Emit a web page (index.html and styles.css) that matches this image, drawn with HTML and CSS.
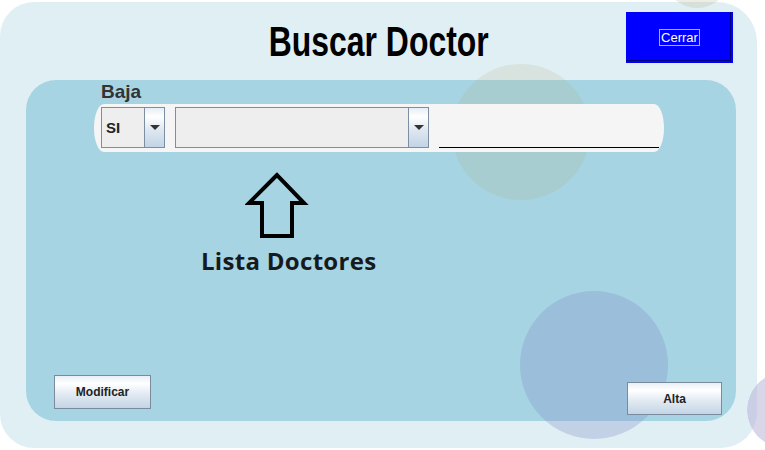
FILE: index.html
```
<!DOCTYPE html>
<html lang="es">
<head>
<meta charset="utf-8">
<title>Buscar Doctor</title>
<link rel="stylesheet" href="styles.css">
</head>
<body>
<div class="frame">
  <span class="blob blob-sun"></span>
  <span class="blob blob-top"></span>
  <span class="blob blob-sea"></span>
  <span class="blob-edge"></span>
  <header class="head">
    <div class="head-side"></div>
    <h1 class="title">Buscar Doctor</h1>
    <button class="close" type="button"><span class="close-label">Cerrar</span></button>
  </header>
  <section class="panel">
    <div class="panel-body">
      <label class="lbl">Baja</label>
      <div class="strip">
        <div class="combo combo-sm"><span class="combo-val">SI</span><span class="combo-btn"><i class="caret"></i></span></div>
        <div class="combo combo-lg"><span class="combo-val"></span><span class="combo-btn"><i class="caret"></i></span></div>
        <div class="field"></div>
      </div>
      <div class="hint">
        <svg class="hint-arrow" width="64" height="70" viewBox="0 0 64 70">
          <polygon points="32,4 4,32 17,32 17,65 47,65 47,32 59,32" fill="none" stroke="#000" stroke-width="4" stroke-linejoin="miter"/>
        </svg>
        <div class="hint-text">Lista Doctores</div>
      </div>
      <div class="actions">
        <button class="btn btn-mod" type="button">Modificar</button>
        <button class="btn btn-alta" type="button">Alta</button>
      </div>
    </div>
  </section>
</div>
</body>
</html>
```
FILE: styles.css
```
html, body {
  margin: 0;
  padding: 0;
  background: #ffffff;
  overflow: hidden;
  width: 765px;
  height: 450px;
}

.frame {
  position: relative;
  width: 757px;
  height: 446px;
  margin-top: 2px;
  background: #e0eff4;
  border-radius: 34px 40px 36px 34px;
  display: flex;
  flex-direction: column;
}

.blob {
  position: absolute;
  border-radius: 50%;
  z-index: 1;
  pointer-events: none;
}
.blob-sun {
  left: 452px;
  top: 62px;
  width: 138px;
  height: 136px;
  background: rgba(175, 170, 120, 0.17);
}
.blob-top {
  left: 664px;
  top: -60px;
  width: 66px;
  height: 66px;
  background: rgba(175, 175, 130, 0.22);
}
.blob-sea {
  left: 520px;
  top: 289px;
  width: 148px;
  height: 148px;
  background: rgba(130, 140, 200, 0.3);
}
.blob-edge {
  position: absolute;
  z-index: 1;
  left: 747px;
  top: 370px;
  width: 18px;
  height: 76px;
  background: radial-gradient(circle 38px at 38px 38px, rgba(185, 180, 215, 0.55) 37.5px, rgba(185, 180, 215, 0) 38px);
}

.head {
  position: relative;
  z-index: 2;
  height: 78px;
  box-sizing: border-box;
  padding-top: 10px;
  display: grid;
  grid-template-columns: 1fr auto 1fr;
  align-items: start;
}

.title {
  margin: 5px 0 0 0;
  font-family: "Liberation Sans", Arial, sans-serif;
  font-weight: bold;
  font-size: 42px;
  line-height: 50px;
  color: #000;
  transform: scaleX(0.76);
  transform-origin: center;
  white-space: nowrap;
}

.close {
  justify-self: end;
  margin: 0 24px 0 0;
  width: 107px;
  height: 51px;
  padding: 0;
  border: none;
  background: #0000ff;
  box-shadow: inset -2px -2px 0 #0000ff, inset -3px -3px 0 #00007a;
  display: flex;
  align-items: center;
  justify-content: center;
}
.close-label {
  font-family: "Liberation Sans", Arial, sans-serif;
  font-size: 13px;
  color: #ffffff;
  border: 1px solid #a8b0d8;
  padding: 0 1px;
  line-height: 15px;
}

.panel {
  margin: 0 21px 27px 26px;
  height: 341px;
  background: #a6d4e3;
  border-radius: 30px;
}

.panel-body {
  position: relative;
  z-index: 2;
  height: 100%;
  box-sizing: border-box;
  padding: 0 14px 6px 28px;
  display: flex;
  flex-direction: column;
}

.lbl {
  margin-left: 47px;
  font-family: "Liberation Sans", Arial, sans-serif;
  font-weight: bold;
  font-size: 19px;
  line-height: 24px;
  color: #333333;
}

.strip {
  margin-left: 40px;
  width: 570px;
  height: 48px;
  box-sizing: border-box;
  padding: 3px 5px 0 7px;
  background: #f5f5f5;
  border-radius: 10px / 24px;
  display: flex;
  gap: 10px;
  align-items: flex-start;
}

.combo {
  height: 41px;
  box-sizing: border-box;
  border: 1px solid #7d8ea3;
  background: #eeeeee;
  display: flex;
}
.combo-sm { width: 64px; }
.combo-lg { width: 254px; }

.combo-val {
  flex: 1;
  display: flex;
  align-items: center;
  padding-left: 4px;
  font-family: "Liberation Sans", Arial, sans-serif;
  font-weight: bold;
  font-size: 15px;
  color: #222222;
}

.combo-btn {
  width: 19px;
  border-left: 1px solid #7d8ea3;
  background: linear-gradient(to bottom, #e6eef6 0%, #ffffff 22%, #dfe8f1 55%, #c2d4e6 100%);
  display: flex;
  align-items: center;
  justify-content: center;
}
.caret {
  width: 0;
  height: 0;
  border-left: 5px solid transparent;
  border-right: 5px solid transparent;
  border-top: 5px solid #333333;
}

.field {
  width: 220px;
  height: 41px;
  box-sizing: border-box;
  border-bottom: 1px solid #000000;
}

.hint {
  display: flex;
  flex-direction: column;
  align-items: flex-start;
}
.hint-arrow {
  display: block;
  margin: 19px 0 0 191px;
}
.hint-text {
  margin: 5px 0 0 147px;
  font-family: "Open Sans", "Noto Sans", sans-serif;
  font-weight: bold;
  font-size: 24px;
  letter-spacing: 0.3px;
  line-height: 30px;
  color: #161a1c;
  white-space: nowrap;
}

.actions {
  margin-top: auto;
  display: flex;
  justify-content: space-between;
  align-items: flex-end;
}

.btn {
  margin: 0;
  padding: 0;
  border: 1px solid #7b8b9e;
  background: linear-gradient(to bottom, #e9eff6 0%, #ffffff 24%, #e3ebf3 55%, #c4d4e5 100%);
  font-family: "Liberation Sans", Arial, sans-serif;
  font-weight: bold;
  font-size: 12px;
  color: #222222;
  box-sizing: border-box;
}
.btn-mod {
  width: 97px;
  height: 34px;
  margin-bottom: 6px;
}
.btn-alta {
  width: 95px;
  height: 33px;
}
```
